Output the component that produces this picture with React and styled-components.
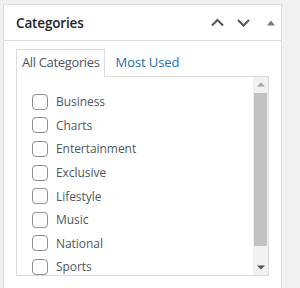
import React, { useState } from "react";
import styled, { createGlobalStyle } from "styled-components";

const GlobalStyle = createGlobalStyle`
  html, body {
    margin: 0;
    padding: 0;
    background: #f0f0f1;
    font-family: "Open Sans", "Noto Sans", sans-serif;
  }
`;

const Page = styled.div`
  padding: 4px 0 0 3px;
  height: 284px;
  overflow: hidden;
`;

const Postbox = styled.div`
  width: 277px;
  height: 300px;
  background: #fff;
  border: 1px solid #dcdcde;
`;

const Header = styled.div`
  display: flex;
  align-items: center;
  height: 35px;
  padding: 0 0 0 12px;
  border-bottom: 1px solid #dcdcde;
`;

const Title = styled.h2`
  flex: 1;
  margin: 0;
  font-size: 13.5px;
  letter-spacing: -0.15px;
  font-weight: 600;
  color: #1d2327;
`;

const Actions = styled.div`
  display: flex;
  align-items: center;
  gap: 2px;
`;

const ActionBtn = styled.button`
  display: flex;
  align-items: center;
  justify-content: center;
  width: 24px;
  height: 26px;
  padding: ${(p) => (p.muted ? "0 0 0 3px" : "0")};
  border: 0;
  background: none;
  color: ${(p) => (p.muted ? "#787c82" : "#50575e")};
`;

const Inside = styled.div`
  padding: 8px 12px 0 12px;
`;

const Tabs = styled.ul`
  display: flex;
  align-items: flex-end;
  margin: 0;
  padding: 0;
  list-style: none;
  font-size: 13px;
  letter-spacing: -0.35px;
`;

const Tab = styled.li`
  position: relative;
  z-index: 1;
  margin: 0 5px -1px 0;
  padding: 3px 4px 5px 5px;
  line-height: 18px;
  border: 1px solid ${(p) => (p.active ? "#dcdcde" : "transparent")};
  border-bottom-color: ${(p) => (p.active ? "#fff" : "transparent")};
  background: ${(p) => (p.active ? "#fff" : "transparent")};
  color: ${(p) => (p.active ? "#50575e" : "#2271b1")};
  letter-spacing: ${(p) => (p.active ? "-0.35px" : "-0.1px")};
  cursor: pointer;
`;

const Panel = styled.div`
  display: flex;
  height: 198px;
  border: 1px solid #dcdcde;
`;

const CheckList = styled.ul`
  flex: 1;
  margin: 0;
  padding: 13px 0 0 15px;
  list-style: none;
  overflow: hidden;
`;

const Item = styled.li`
  height: 23.6px;
  display: flex;
  align-items: center;
`;

const Label = styled.label`
  display: flex;
  align-items: center;
  gap: 8px;
  font-size: 12px;
  letter-spacing: -0.05px;
  color: #50575e;
`;

const Box = styled.input`
  appearance: none;
  margin: 0;
  width: 16px;
  height: 16px;
  border: 1px solid #8c8f94;
  border-radius: 4px;
  background: #fff;
  box-sizing: border-box;
`;

const ScrollBar = styled.div`
  display: flex;
  flex-direction: column;
  width: 15px;
  background: #f1f1f1;
`;

const ScrollBtn = styled.div`
  display: flex;
  align-items: center;
  justify-content: center;
  height: 15px;
  color: ${(p) => (p.disabled ? "#a3a3a3" : "#505050")};
`;

const Track = styled.div`
  flex: 1;
  padding-top: 1px;
`;

const Thumb = styled.div`
  height: 153px;
  margin: 0 1px;
  background: #c1c1c1;
`;

const Chevron = ({ up }) => (
  <svg width="13" height="13" viewBox="0 0 13 13">
    <path
      d={up ? "M1 9.5 L6.5 4 L12 9.5" : "M1 4 L6.5 9.5 L12 4"}
      fill="none"
      stroke="currentColor"
      strokeWidth="2"
    />
  </svg>
);

const Caret = () => (
  <svg width="10" height="10" viewBox="0 0 10 10">
    <path d="M1 7.5 L5 2.5 L9 7.5 Z" fill="currentColor" />
  </svg>
);

const Arrow = ({ up }) => (
  <svg width="8" height="5" viewBox="0 0 8 5">
    <path d={up ? "M0 4.5 L4 0.5 L8 4.5 Z" : "M0 0.5 L4 4.5 L8 0.5 Z"} fill="currentColor" />
  </svg>
);

const categories = [
  "Business",
  "Charts",
  "Entertainment",
  "Exclusive",
  "Lifestyle",
  "Music",
  "National",
  "Sports",
];

export default function App() {
  const [tab, setTab] = useState("all");

  return (
    <Page>
      <GlobalStyle />
      <Postbox>
        <Header>
          <Title>Categories</Title>
          <Actions>
            <ActionBtn aria-label="Move up">
              <Chevron up />
            </ActionBtn>
            <ActionBtn aria-label="Move down">
              <Chevron />
            </ActionBtn>
            <ActionBtn muted aria-label="Toggle panel">
              <Caret />
            </ActionBtn>
          </Actions>
        </Header>
        <Inside>
          <Tabs>
            <Tab active={tab === "all"} onClick={() => setTab("all")}>
              All Categories
            </Tab>
            <Tab active={tab === "pop"} onClick={() => setTab("pop")}>
              Most Used
            </Tab>
          </Tabs>
          <Panel>
            <CheckList>
              {categories.map((name) => (
                <Item key={name}>
                  <Label>
                    <Box type="checkbox" />
                    {name}
                  </Label>
                </Item>
              ))}
            </CheckList>
            <ScrollBar>
              <ScrollBtn disabled>
                <Arrow up />
              </ScrollBtn>
              <Track>
                <Thumb />
              </Track>
              <ScrollBtn>
                <Arrow />
              </ScrollBtn>
            </ScrollBar>
          </Panel>
        </Inside>
      </Postbox>
    </Page>
  );
}
